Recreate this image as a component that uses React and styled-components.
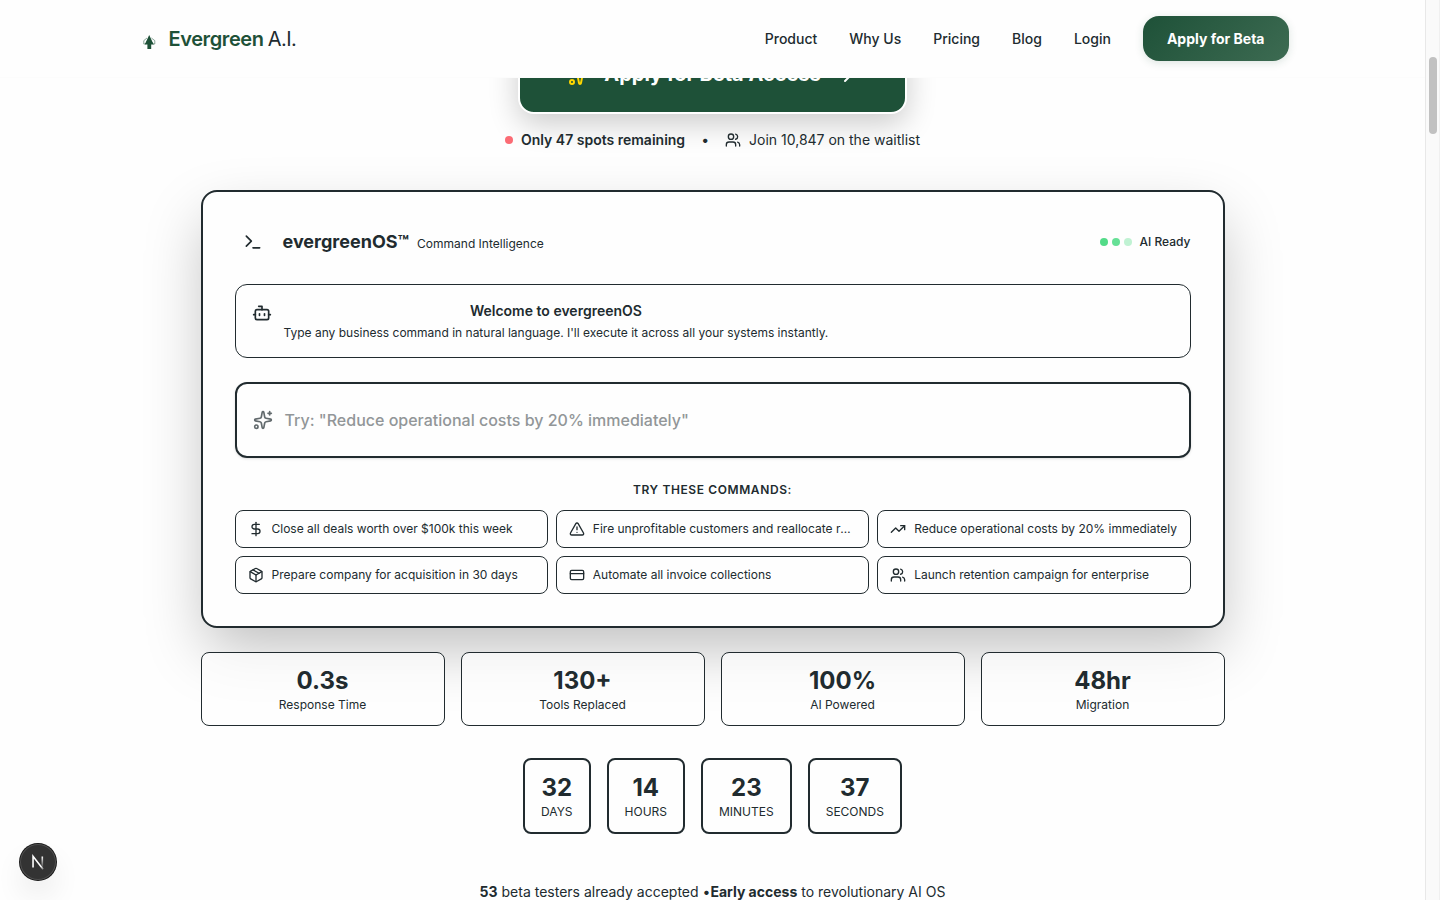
import React from "react";
import styled, { createGlobalStyle } from "styled-components";
import {
  ArrowRight, Bot, CreditCard, DollarSign, Package, Sparkles, Terminal,
  TrendingUp, TriangleAlert, Users,
} from "lucide-react";

const ink = "#212b2f";
const green = "#1e5138";

const GlobalStyle = createGlobalStyle`
  *, *::before, *::after { box-sizing: border-box; }
  body {
    margin: 0;
    background: #fefefe;
    color: ${ink};
    font-family: Inter, "Liberation Sans", sans-serif;
    -webkit-font-smoothing: antialiased;
  }
  svg { flex-shrink: 0; display: block; }
`;

const Screen = styled.div`
  display: flex;
  width: 1440px;
  height: 900px;
  overflow: hidden;
`;

const Page = styled.div`
  position: relative;
  width: 1425px;
  height: 900px;
  overflow: hidden;
`;

const ScrollTrack = styled.div`
  width: 15px;
  height: 900px;
  padding: 57px 2px 0 3px;
  background: #fafafa;
  border-left: 1px solid #e8e8e8;
  border-right: 1px solid #f0f0f0;
`;

const ScrollThumb = styled.div`
  width: 8px;
  height: 77px;
  border-radius: 4px;
  background: #c1c1c1;
`;

const TopBar = styled.header`
  position: absolute;
  inset: 0 0 auto 0;
  z-index: 10;
  height: 78px;
  background: #fefefe;
  border-bottom: 1px solid #fcfcfc;
`;

const TopBarInner = styled.div`
  display: flex;
  align-items: center;
  justify-content: space-between;
  max-width: 1200px;
  margin: 0 auto;
  padding: 16px 24px;
`;

const Brand = styled.div`
  display: flex;
  align-items: center;
  gap: 8px;
  font-size: 20px;
  line-height: 30px;
  font-weight: 600;
  letter-spacing: -0.4px;
  color: ${green};

  span {
    margin-left: -0.4px;
    font-weight: 400;
    letter-spacing: -0.6px;
    color: ${ink};
  }
`;

const Nav = styled.nav`
  display: flex;
  align-items: center;
  gap: 32px;
`;

const NavLink = styled.a`
  font-size: 14px;
  line-height: 21px;
  font-weight: 500;
`;

const NavButton = styled.a`
  padding: 12px 24px;
  border-radius: 16px;
  background: linear-gradient(135deg, ${green}, #3d6b52);
  box-shadow: 0 2px 8px rgba(30, 81, 56, 0.15);
  color: #fff;
  font-size: 14px;
  line-height: 21px;
  font-weight: 700;
`;

const Hero = styled.main`
  display: flex;
  flex-direction: column;
  align-items: center;
  width: 1024px;
  margin: 0 auto;
  padding-top: 34px;
`;

const HeroButton = styled.a`
  display: flex;
  align-items: center;
  gap: 12px;
  padding: 24px 48px;
  border: 2px solid #fff;
  border-radius: 16px;
  background: ${green};
  box-shadow: 0 10px 30px rgba(0, 0, 0, 0.2);
  color: #fff;
  font-size: 20px;
  line-height: 28px;
  font-weight: 700;

  svg:first-child { color: #ffd700; }
`;

const SpotsRow = styled.div`
  display: flex;
  align-items: center;
  gap: 16px;
  margin-top: 16px;
  font-size: 14px;
  line-height: 20px;
`;

const SpotsItem = styled.div`
  display: flex;
  align-items: center;
  gap: 8px;
  font-weight: ${(p) => (p.$strong ? 600 : 400)};
`;

const Dot = styled.i`
  width: 8px;
  height: 8px;
  border-radius: 50%;
  background: ${(p) => p.$color};
`;

const Console = styled.section`
  width: 100%;
  margin-top: 40px;
  padding: 32px;
  border: 2px solid ${ink};
  border-radius: 16px;
  background: #fefefe;
  box-shadow: 0 25px 60px -5px rgba(0, 0, 0, 0.25);
`;

const ConsoleHead = styled.div`
  display: flex;
  align-items: center;
  justify-content: space-between;
  height: 36px;
`;

const ConsoleName = styled.div`
  display: flex;
  align-items: center;
  gap: 12px;
`;

const IconBox = styled.div`
  padding: 8px;
`;

const ConsoleTitle = styled.div`
  padding-top: 2px;
  font-size: 18px;
  line-height: 28px;
  font-weight: 700;

  small {
    margin-left: 8px;
    font-size: 12px;
    font-weight: 400;
  }
`;

const Status = styled.div`
  display: flex;
  align-items: center;
  gap: 8px;
  font-size: 12px;
  line-height: 16px;
  font-weight: 500;
`;

const Dots = styled.div`
  display: flex;
  gap: 4px;
`;

const Welcome = styled.div`
  display: flex;
  gap: 12px;
  margin-top: 24px;
  padding: 16px;
  border: 1px solid ${ink};
  border-radius: 12px;

  svg { margin-top: 2px; }
`;

const WelcomeText = styled.div`
  text-align: center;
  font-size: 12px;
  line-height: 16px;

  strong {
    display: block;
    margin-bottom: 4px;
    font-size: 14px;
    line-height: 20px;
    font-weight: 600;
  }
`;

const Prompt = styled.div`
  display: flex;
  align-items: center;
  gap: 12px;
  height: 76px;
  margin-top: 24px;
  padding: 0 16px;
  border: 2px solid ${ink};
  border-radius: 12px;
  box-shadow: 0 1px 3px rgba(0, 0, 0, 0.1), 0 1px 2px -1px rgba(0, 0, 0, 0.1);
  color: #929698;
  font-size: 16px;
  line-height: 24px;
  font-weight: 500;

  svg { color: #626a6d; }
`;

const SuggestTitle = styled.div`
  margin: 24px 0 12px;
  text-align: center;
  font-size: 12px;
  line-height: 16px;
  font-weight: 600;
  letter-spacing: 0.6px;
`;

const SuggestGrid = styled.div`
  display: grid;
  grid-template-columns: repeat(3, minmax(0, 1fr));
  gap: 8px;
`;

const Suggestion = styled.div`
  display: flex;
  align-items: center;
  gap: 8px;
  height: 38px;
  padding: 0 12px;
  border: 1px solid ${ink};
  border-radius: 8px;
  font-size: 12px;
  line-height: 16px;

  span {
    overflow: hidden;
    text-overflow: ellipsis;
    white-space: nowrap;
  }
`;

const Stats = styled.div`
  display: grid;
  grid-template-columns: repeat(4, 1fr);
  gap: 16px;
  width: 100%;
  margin-top: 24px;
`;

const Countdown = styled.div`
  display: flex;
  gap: 16px;
  margin-top: 32px;
`;

const Figure = styled.div`
  padding: 12px ${(p) => (p.$bold ? 16 : 12)}px;
  border: ${(p) => (p.$bold ? 2 : 1)}px solid ${ink};
  border-radius: 8px;
  background: rgba(254, 254, 254, 0.7);
  text-align: center;
  font-size: 12px;
  line-height: 16px;

  strong {
    display: block;
    font-size: 24px;
    line-height: 32px;
    font-weight: 700;
  }
`;

const Footnote = styled.p`
  margin: 48px 0 0;
  font-size: 14px;
  line-height: 20px;
`;

const DevBadge = styled.div`
  position: absolute;
  left: 20px;
  bottom: 20px;
  display: flex;
  align-items: center;
  justify-content: center;
  width: 36px;
  height: 36px;
  border-radius: 50%;
  background: #333;
  box-shadow: 0 0 0 1px #171717, inset 0 0 0 1px rgba(255, 255, 255, 0.14),
    0 16px 32px -8px rgba(0, 0, 0, 0.24);
`;

const commands = [
  [DollarSign, "Close all deals worth over $100k this week"],
  [TriangleAlert, "Fire unprofitable customers and reallocate resources"],
  [TrendingUp, "Reduce operational costs by 20% immediately"],
  [Package, "Prepare company for acquisition in 30 days"],
  [CreditCard, "Automate all invoice collections"],
  [Users, "Launch retention campaign for enterprise"],
];

const stats = [
  ["0.3s", "Response Time"],
  ["130+", "Tools Replaced"],
  ["100%", "AI Powered"],
  ["48hr", "Migration"],
];

const countdown = [
  ["32", "DAYS"],
  ["14", "HOURS"],
  ["23", "MINUTES"],
  ["37", "SECONDS"],
];

const TreeLogo = () => (
  <svg width="24" height="24" viewBox="0 0 24 24" fill={green}>
    <path d="M12.2 8 L16.4 17 H14.2 V22 H10.4 V17 H8 Z" />
    <path d="M10 11 L6.8 13.6 V17 H8.6 M14.4 11 L17.8 13.6 V17 H15.8" fill="none" stroke={green} strokeWidth="1" opacity=".5" />
    <path d="M7.8 17.6 L12.2 11 L16.8 17.6 Z" />
  </svg>
);

const NextMark = () => (
  <svg width="36" height="36" viewBox="2 2 36 36" fill="none">
    <defs>
      <linearGradient id="diag" x1="9.95" y1="11.13" x2="15.56" y2="18.9" gradientUnits="userSpaceOnUse">
        <stop stopColor="#fff" />
        <stop offset=".6" stopColor="#fff" stopOpacity="0" />
        <stop offset="1" stopColor="#fff" stopOpacity="0" />
      </linearGradient>
      <linearGradient id="stem" x1="11.8" y1="1" x2="11.8" y2="13.1" gradientUnits="userSpaceOnUse">
        <stop stopColor="#fff" />
        <stop offset="1" stopColor="#fff" stopOpacity="0" />
      </linearGradient>
    </defs>
    <g transform="translate(12.7 13.3)" strokeWidth="1.6">
      <path d="M12.4 14 L2.34 1 V12.2" stroke="url(#diag)" />
      <path d="M11.6 1.2 V12.6" stroke="url(#stem)" />
    </g>
  </svg>
);

export default function App() {
  return (
    <>
      <GlobalStyle />
      <Screen>
        <Page>
          <TopBar>
            <TopBarInner>
              <Brand>
                <TreeLogo />
                <div>Evergreen <span>A.I.</span></div>
              </Brand>
              <Nav>
                {["Product", "Why Us", "Pricing", "Blog", "Login"].map((label) => (
                  <NavLink key={label}>{label}</NavLink>
                ))}
                <NavButton>Apply for Beta</NavButton>
              </Nav>
            </TopBarInner>
          </TopBar>

          <Hero>
            <HeroButton>
              <Sparkles size={24} />
              Apply for Beta Access
              <ArrowRight size={24} />
            </HeroButton>
            <SpotsRow>
              <SpotsItem $strong>
                <Dot $color="#fb6b74" />
                Only 47 spots remaining
              </SpotsItem>
              <span>•</span>
              <SpotsItem>
                <Users size={16} />
                Join 10,847 on the waitlist
              </SpotsItem>
            </SpotsRow>

            <Console>
              <ConsoleHead>
                <ConsoleName>
                  <IconBox><Terminal size={20} /></IconBox>
                  <ConsoleTitle>
                    evergreenOS™<small>Command Intelligence</small>
                  </ConsoleTitle>
                </ConsoleName>
                <Status>
                  <Dots>
                    <Dot $color="#53db88" />
                    <Dot $color="#66e096" />
                    <Dot $color="#c0f2d3" />
                  </Dots>
                  AI Ready
                </Status>
              </ConsoleHead>

              <Welcome>
                <Bot size={20} />
                <WelcomeText>
                  <strong>Welcome to evergreenOS</strong>
                  Type any business command in natural language. I'll execute it across all your systems instantly.
                </WelcomeText>
              </Welcome>

              <Prompt>
                <Sparkles size={20} />
                Try: "Reduce operational costs by 20% immediately"
              </Prompt>

              <SuggestTitle>TRY THESE COMMANDS:</SuggestTitle>
              <SuggestGrid>
                {commands.map(([Icon, label]) => (
                  <Suggestion key={label}>
                    <Icon size={16} />
                    <span>{label}</span>
                  </Suggestion>
                ))}
              </SuggestGrid>
            </Console>

            <Stats>
              {stats.map(([value, label]) => (
                <Figure key={label}><strong>{value}</strong>{label}</Figure>
              ))}
            </Stats>
            <Countdown>
              {countdown.map(([value, label]) => (
                <Figure key={label} $bold><strong>{value}</strong>{label}</Figure>
              ))}
            </Countdown>
            <Footnote>
              <b>53</b> beta testers already accepted •<b>Early access</b> to revolutionary AI OS
            </Footnote>
          </Hero>

          <DevBadge><NextMark /></DevBadge>
        </Page>
        <ScrollTrack><ScrollThumb /></ScrollTrack>
      </Screen>
    </>
  );
}
